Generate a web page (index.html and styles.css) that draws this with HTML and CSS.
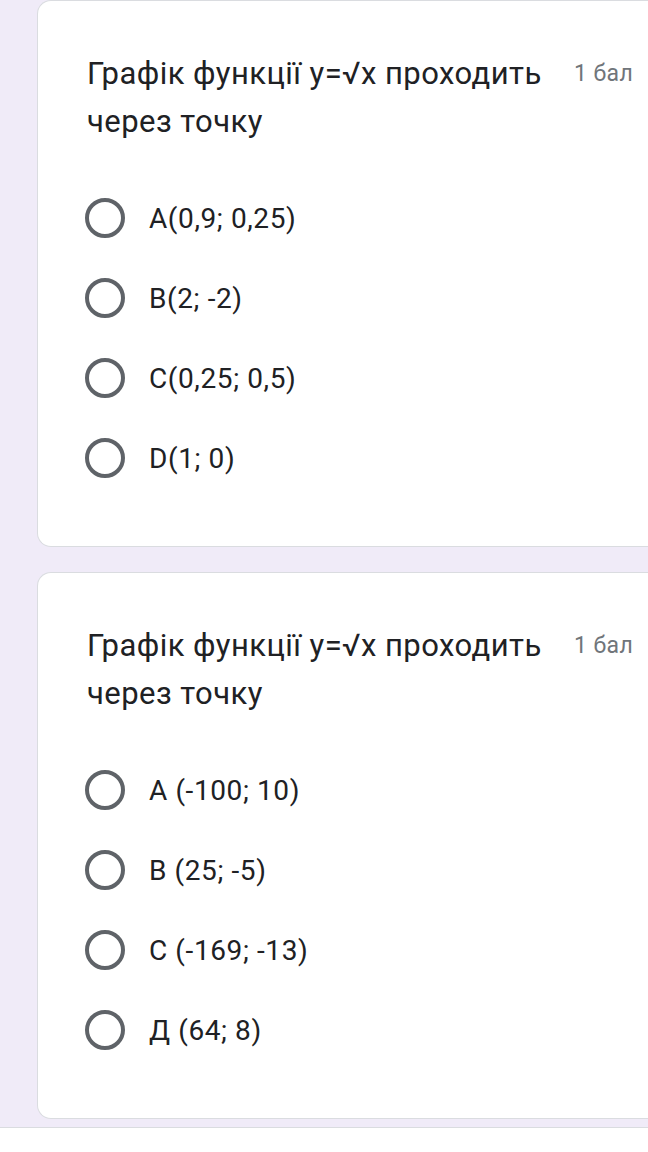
FILE: index.html
```html
<!DOCTYPE html>
<html lang="uk">
<head>
<meta charset="utf-8">
<link rel="stylesheet" href="styles.css">
</head>
<body>
<main class="page">
  <section class="card">
    <div class="head">
      <div class="title">Графік функції y=√x проходить через точку</div>
      <div class="points">1 бал</div>
    </div>
    <ul class="options">
      <li class="option"><span class="radio"></span><span class="label">A(0,9; 0,25)</span></li>
      <li class="option"><span class="radio"></span><span class="label">B(2; -2)</span></li>
      <li class="option"><span class="radio"></span><span class="label">C(0,25; 0,5)</span></li>
      <li class="option"><span class="radio"></span><span class="label">D(1; 0)</span></li>
    </ul>
  </section>
  <section class="card">
    <div class="head">
      <div class="title">Графік функції y=√x проходить через точку</div>
      <div class="points">1 бал</div>
    </div>
    <ul class="options">
      <li class="option"><span class="radio"></span><span class="label">A (-100; 10)</span></li>
      <li class="option"><span class="radio"></span><span class="label">B (25; -5)</span></li>
      <li class="option"><span class="radio"></span><span class="label">C (-169; -13)</span></li>
      <li class="option"><span class="radio"></span><span class="label">Д (64; 8)</span></li>
    </ul>
  </section>
</main>
<footer class="bottombar"></footer>
</body>
</html>
```

FILE: styles.css
```css
* { box-sizing: border-box; }
html, body {
  margin: 0;
  padding: 0;
  height: 1152px;
  overflow: hidden;
}
body {
  background: #f0ebf8;
  font-family: Roboto, "Noto Sans", sans-serif;
  color: #202124;
}
.page {
  display: flex;
  flex-direction: column;
  gap: 25px;
  padding-left: 37px;
  height: 1127px;
}
.card {
  background: #fff;
  border: 1px solid #dadce0;
  border-right: none;
  border-radius: 14px 0 0 14px;
  height: 547px;
  padding: 49px 0 0 49px;
}
.head {
  display: flex;
  align-items: flex-start;
}
.title {
  width: 470px;
  font-size: 31px;
  letter-spacing: 0.45px;
  line-height: 48px;
  color: #202124;
}
.points {
  margin-left: 17px;
  font-size: 23px;
  letter-spacing: 0.4px;
  line-height: 48px;
  color: #70757a;
  white-space: nowrap;
}
.options {
  list-style: none;
  margin: 32px 0 0;
  padding: 0;
}
.option {
  display: flex;
  align-items: center;
  height: 80px;
}
.radio {
  width: 40px;
  height: 40px;
  border: 4px solid #5f6368;
  border-radius: 50%;
  flex: none;
  margin-left: -2px;
}
.label {
  margin-left: 24px;
  font-size: 28px;
  letter-spacing: 0.6px;
  color: #202124;
}
.bottombar {
  height: 25px;
  background: #fff;
  border-top: 1px solid #dadce0;
}
```
